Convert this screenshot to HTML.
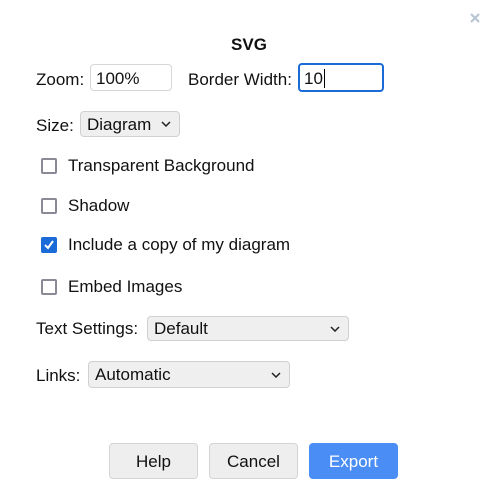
<!DOCTYPE html>
<html><head><style>
body{margin:0;width:498px;height:492px;background:#fff;font-family:"Liberation Sans",sans-serif;color:#111;position:relative;overflow:hidden;font-size:17px}
.a{position:absolute;white-space:nowrap}
.in{position:absolute;box-sizing:border-box;border:1px solid #d6d6d6;border-radius:4px;background:#fff;padding-left:5px;font-size:17px}
.sel{position:absolute;box-sizing:border-box;border:1px solid #d0d0d0;border-radius:4px;background:#efefef;padding-left:6px;font-size:17px}
.sel svg{position:absolute;right:8px;top:50%;margin-top:-3px}
.cb{position:absolute;left:41px;width:16px;height:16px;box-sizing:border-box;border:2px solid #8a8a96;border-radius:2px;background:#fff}
.btn{position:absolute;top:443px;width:89px;height:36px;box-sizing:border-box;border:1px solid #d4d4d4;border-radius:4px;background:#eeeeee;text-align:center;line-height:36px;font-size:17px}
</style></head><body>
<svg class="a" style="left:469px;top:12px" width="12" height="12"><path d="M2 2L10 10M10 2L2 10" stroke="#b8c4d4" stroke-width="2.2"/></svg>
<div class="a" style="left:0;width:498px;text-align:center;top:35px;font-weight:bold;font-size:17px">SVG</div>
<div class="a" style="left:36px;top:70px">Zoom:</div>
<div class="in" style="left:90px;top:64px;width:82px;height:27px;line-height:27px">100%</div>
<div class="a" style="left:188px;top:70px">Border Width:</div>
<div class="in" style="left:298px;top:63px;width:86px;height:29px;border:2px solid #1a6ad8;line-height:27px;padding-left:4px">10<span style="border-left:1px solid #000;margin-left:1px"></span></div>
<div class="a" style="left:36px;top:116px">Size:</div>
<div class="sel" style="left:80px;top:111px;width:100px;height:26px;line-height:25px">Diagram<svg width="10" height="6"><path d="M1 1L5 5L9 1" stroke="#222" stroke-width="1.5" fill="none"/></svg></div>
<div class="cb" style="top:158px"></div><div class="a" style="left:68px;top:156px">Transparent Background</div>
<div class="cb" style="top:198px"></div><div class="a" style="left:68px;top:196px">Shadow</div>
<div class="cb" style="top:237px;background:#1a6ad8;border-color:#1a6ad8"><svg width="12" height="12" style="position:absolute;left:0;top:0"><path d="M2 6L5 9L10 2" stroke="#fff" stroke-width="2" fill="none"/></svg></div><div class="a" style="left:68px;top:235px">Include a copy of my diagram</div>
<div class="cb" style="top:279px"></div><div class="a" style="left:68px;top:277px">Embed Images</div>
<div class="a" style="left:36px;top:319px">Text Settings:</div>
<div class="sel" style="left:147px;top:316px;width:202px;height:25px;line-height:24px">Default<svg width="10" height="6"><path d="M1 1L5 5L9 1" stroke="#222" stroke-width="1.5" fill="none"/></svg></div>
<div class="a" style="left:36px;top:366px">Links:</div>
<div class="sel" style="left:88px;top:361px;width:202px;height:27px;line-height:26px">Automatic<svg width="10" height="6"><path d="M1 1L5 5L9 1" stroke="#222" stroke-width="1.5" fill="none"/></svg></div>
<div class="btn" style="left:109px">Help</div>
<div class="btn" style="left:209px">Cancel</div>
<div class="btn" style="left:309px;background:#4a8ef5;border-color:#4a8ef5;color:#fff">Export</div>
</body></html>
